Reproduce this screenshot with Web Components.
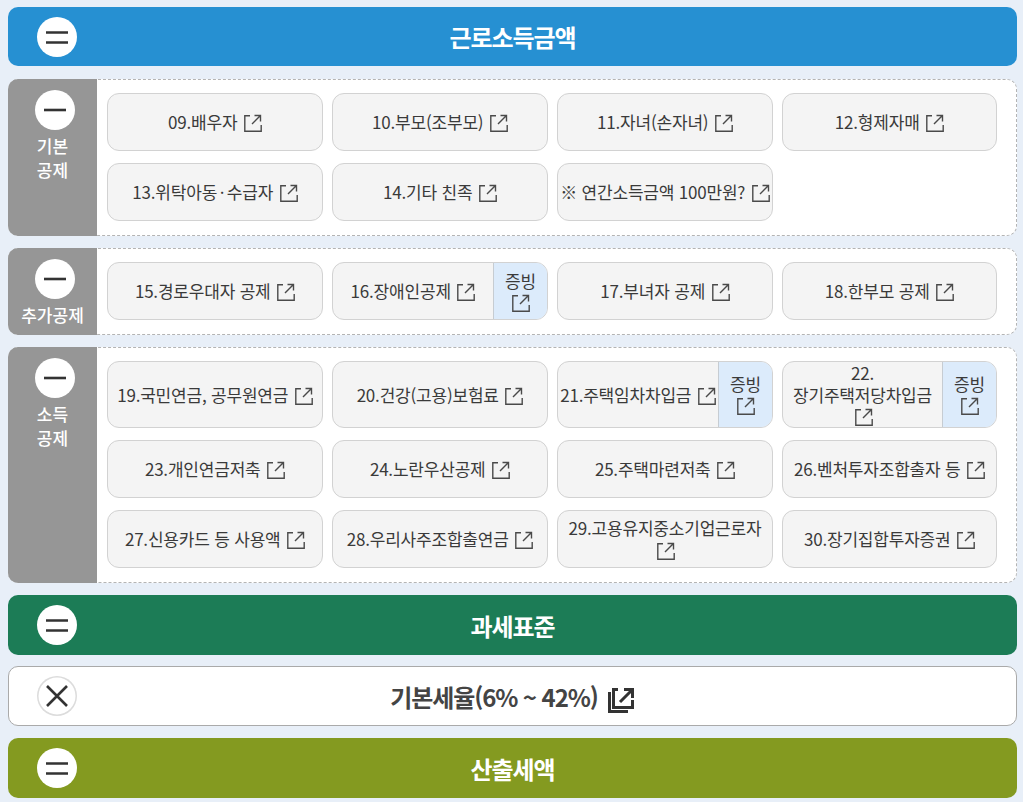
<!DOCTYPE html>
<html lang="ko">
<head>
<meta charset="utf-8">
<title>근로소득금액</title>
<style>
  html, body { margin: 0; padding: 0; }
  body {
    background: #e8eff8;
    padding: 7px 6px 0 8px;
    font-family: "Noto Sans CJK KR", "Noto Sans", sans-serif;
    height: 795px;
    overflow: hidden;
  }
  #page { display: flex; flex-direction: column; gap: 12px; }
  #first { margin-bottom: 1px; }
  #white { margin-top: -1px; }
  .tight { word-spacing: -2px; }
</style>
</head>
<body>
<div id="page">
  <tax-bar id="first" color="#2690d2" h="59">근로소득금액</tax-bar>

  <tax-section h="157">
    <span slot="label">기본<br>공제</span>
    <tax-item>09.배우자</tax-item>
    <tax-item>10.부모(조부모)</tax-item>
    <tax-item>11.자녀(손자녀)</tax-item>
    <tax-item>12.형제자매</tax-item>
    <tax-item><span class="tight">13.위탁아동 · 수급자</span></tax-item>
    <tax-item>14.기타 친족</tax-item>
    <tax-item>※ 연간소득금액 100만원?</tax-item>
  </tax-section>

  <tax-section h="87">
    <span slot="label">추가공제</span>
    <tax-item>15.경로우대자 공제</tax-item>
    <tax-item proof>16.장애인공제</tax-item>
    <tax-item>17.부녀자 공제</tax-item>
    <tax-item>18.한부모 공제</tax-item>
  </tax-section>

  <tax-section h="236">
    <span slot="label">소득<br>공제</span>
    <tax-item>19.국민연금, 공무원연금</tax-item>
    <tax-item>20.건강(고용)보험료</tax-item>
    <tax-item proof>21.주택임차차입금</tax-item>
    <tax-item proof>22.<br>장기주택저당차입금</tax-item>
    <tax-item>23.개인연금저축</tax-item>
    <tax-item>24.노란우산공제</tax-item>
    <tax-item>25.주택마련저축</tax-item>
    <tax-item>26.벤처투자조합출자 등</tax-item>
    <tax-item>27.신용카드 등 사용액</tax-item>
    <tax-item>28.우리사주조합출연금</tax-item>
    <tax-item>29.고용유지중소기업근로자</tax-item>
    <tax-item>30.장기집합투자증권</tax-item>
  </tax-section>

  <tax-bar color="#1c7c56" h="60">과세표준</tax-bar>
  <tax-bar id="white" light h="60">기본세율(6% ~ 42%)</tax-bar>
  <tax-bar color="#849a20" h="60">산출세액</tax-bar>
</div>

<script>
/**
 * 바깥 링크 아이콘
 */
class ExtIcon extends HTMLElement {
  constructor() {
    super();
    this.attachShadow({ mode: 'open' });
    this.shadowRoot.innerHTML = `
      <style>
        :host { display: inline-block; width: 18px; height: 18px; vertical-align: -3px; margin-left: 2px; }
        svg { display: block; }
      </style>
      <svg width="18" height="18" viewBox="0 0 18 18" fill="none" stroke="#4a4a4a" stroke-width="1.4">
        <path d="M6 1.7H.8V17.2H17.2V11"/>
        <path d="M8 10L16.2 1.8M10.5 1.5H16.5V7.5"/>
      </svg>
    `;
  }
}
customElements.define('ext-icon', ExtIcon);

/**
 * 등호, 빼기, 곱하기 기호가 있는 둥근 단추
 */
class RoundSign extends HTMLElement {
  constructor() {
    super();
    this.attachShadow({ mode: 'open' });
    const marks = {
      equal: '<path d="M9 15.5H31M9 25.5H31"/>',
      minus: '<path d="M9 20H31"/>',
      times: '<path d="M10 10L30 30M30 10L10 30"/>'
    };
    const kind = this.getAttribute('kind') || 'equal';
    this.shadowRoot.innerHTML = `
      <style>
        :host {
          display: block; width: 40px; height: 40px; border-radius: 50%;
          background: #fff; flex: none; box-sizing: border-box;
        }
        :host([kind="times"]) { box-shadow: inset 0 0 0 1.5px #dcdcdc; }
        svg { display: block; }
      </style>
      <svg width="40" height="40" viewBox="0 0 40 40" fill="none" stroke="#333" stroke-width="2.6">${marks[kind]}</svg>
    `;
  }
}
customElements.define('round-sign', RoundSign);

/**
 * 색이 있는 제목 막대
 */
class TaxBar extends HTMLElement {
  constructor() {
    super();
    this.attachShadow({ mode: 'open' });
    const light = this.hasAttribute('light');
    this.shadowRoot.innerHTML = `
      <style>
        :host {
          display: flex; align-items: center; box-sizing: border-box;
          height: ${this.getAttribute('h')}px;
          border-radius: 10px;
          padding-left: 29px;
          background: ${light ? '#fff' : this.getAttribute('color')};
          ${light ? 'border: 1px solid #aaa; padding-left: 28px;' : ''}
        }
        .title {
          flex: 1; padding-right: 69px;
          font-size: 24px; font-weight: 700; letter-spacing: -1.1px;
          color: ${light ? '#444' : '#fff'};
          display: flex; justify-content: center; align-items: center; gap: 10px;
        }
        svg { display: block; margin-top: 8px; }
      </style>
      <round-sign kind="${light ? 'times' : 'equal'}"></round-sign>
      <div class="title"><span><slot></slot></span>${light ? `
        <svg width="26" height="26" viewBox="0 0 26 26" fill="none" stroke="#333" stroke-width="3">
          <path d="M1.5 5V24.5H20"/>
          <path d="M10 2.5H5.5V20.5H24.5V13"/>
          <path d="M12 15L23 4M16 2.5H24.5V11"/>
        </svg>` : ''}</div>
    `;
  }
}
customElements.define('tax-bar', TaxBar);

/**
 * 공제 묶음 (왼쪽 회색 칸 + 항목 격자)
 */
class TaxSection extends HTMLElement {
  constructor() {
    super();
    this.attachShadow({ mode: 'open' });
    this.shadowRoot.innerHTML = `
      <style>
        :host {
          display: flex; box-sizing: border-box;
          height: ${this.getAttribute('h')}px;
          background: #fff;
          border: 1px dashed #b4b4b4;
          border-left: 0;
          border-radius: 10px;
        }
        .side {
          width: 89px; flex: none; margin: -1px 0;
          background: #969696; border-radius: 10px 0 0 10px;
          display: flex; flex-direction: column; align-items: center;
          padding-top: 11px; box-sizing: border-box;
          color: #fff; font-size: 17px; font-weight: 500; line-height: 24px;
          text-align: center;
        }
        round-sign { margin-left: 4px; }
        .label { margin-top: 4px; }
        .grid {
          flex: 1; display: grid;
          grid-template-columns: repeat(3, 216px) 215px;
          column-gap: 9px; row-gap: 12px;
          align-content: start;
          padding: 13px 0 0 10px;
        }
      </style>
      <div class="side">
        <round-sign kind="minus"></round-sign>
        <div class="label"><slot name="label"></slot></div>
      </div>
      <div class="grid"><slot></slot></div>
    `;
  }
}
customElements.define('tax-section', TaxSection);

/**
 * 공제 항목 단추. proof 속성이 있으면 오른쪽에 증빙 칸이 붙는다
 */
class TaxItem extends HTMLElement {
  constructor() {
    super();
    this.attachShadow({ mode: 'open' });
    const proof = this.hasAttribute('proof');
    this.shadowRoot.innerHTML = `
      <style>
        :host {
          display: flex; box-sizing: border-box; min-height: 58px;
          background: #f4f4f4; border: 1px solid #d2d2d2; border-radius: 12px;
          overflow: hidden; color: #3a3a3a;
          font-size: 17px; line-height: 21.5px; letter-spacing: -0.2px;
        }
        .text {
          flex: 1; min-width: 0; padding: 0 1px;
          display: flex; align-items: center; justify-content: center;
          text-align: center;
        }
        .proof {
          width: 54px; flex: none; box-sizing: border-box;
          background: #dcebfb; border-left: 1px solid #c6ccd2;
          display: flex; align-items: center; justify-content: center;
          text-align: center;
        }
      </style>
      <div class="text"><div><slot></slot> <ext-icon></ext-icon></div></div>
      ${proof ? '<div class="proof"><div>증빙<br><ext-icon></ext-icon></div></div>' : ''}
    `;
  }
}
customElements.define('tax-item', TaxItem);
</script>
</body>
</html>
